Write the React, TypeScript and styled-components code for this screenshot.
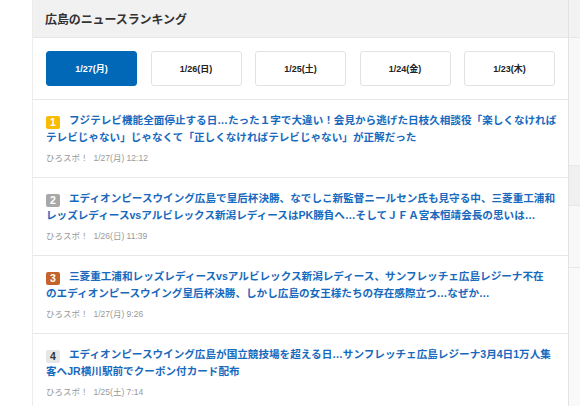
import React, { useState } from "react";
import styled, { createGlobalStyle } from "styled-components";

const Global = createGlobalStyle`
  html, body { margin: 0; padding: 0; background: #ffffff; }
  body { font-family: "Noto Sans CJK JP", "Noto Sans", sans-serif; }
  * { box-sizing: border-box; }
`;

const Page = styled.div`
  display: flex;
  align-items: flex-start;
  width: 580px;
  height: 406px;
  overflow: hidden;
  padding-left: 32px;
  background: #ffffff;
`;

const Panel = styled.section`
  width: 537px;
  flex: none;
  border-left: 1px solid #ececec;
  border-right: 1px solid #e3e3e3;
  display: block;
`;

const Header = styled.h2`
  margin: 0;
  height: 38px;
  padding: 0 12px;
  display: flex;
  align-items: center;
  background: #f1f1f1;
  border-bottom: 1px solid #e6e6e6;
  font-size: 12px;
  font-weight: 700;
  color: #333333;
  letter-spacing: -0.1px;
`;

const Tabs = styled.div`
  display: grid;
  grid-template-columns: repeat(5, 1fr);
  column-gap: 13.5px;
  padding: 13px;
  border-bottom: 1px solid #e8e8e8;
`;

const Tab = styled.button<{ $active: boolean }>`
  height: 35px;
  border-radius: 3px;
  border: 1px solid ${(p) => (p.$active ? "#0068b7" : "#e2e2e2")};
  background: ${(p) => (p.$active ? "#0068b7" : "#ffffff")};
  color: ${(p) => (p.$active ? "#ffffff" : "#222222")};
  font-family: "Liberation Sans", "Noto Sans CJK JP", sans-serif;
  font-weight: 700;
  font-size: 9px;
  padding: 0;
  cursor: pointer;
`;

const List = styled.ol`
  list-style: none;
  margin: 0;
  padding: 0;
`;

const Item = styled.li`
  padding: 12px 13px 13px 13px;
  border-bottom: 1px solid #e8e8e8;
  height: 78px;
`;

const Title = styled.a`
  display: block;
  font-family: "Liberation Sans", "Noto Sans CJK JP", sans-serif;
  font-size: 10.6px;
  line-height: 17px;
  font-weight: 700;
  color: #1769bd;
  text-decoration: none;
  white-space: nowrap;
`;

const Badge = styled.span<{ $bg: string; $fg: string }>`
  display: inline-flex;
  align-items: center;
  justify-content: center;
  width: 14px;
  height: 13px;
  margin-right: 9px;
  border-radius: 2px;
  background: ${(p) => p.$bg};
  color: ${(p) => p.$fg};
  font-family: "Liberation Sans", sans-serif;
  font-size: 10.5px;
  font-weight: 700;
  vertical-align: -2px;
  line-height: 1;
`;

const Meta = styled.div`
  margin-top: 4px;
  font-size: 8.5px;
  line-height: 14px;
  color: #999999;
  font-family: "Liberation Sans", "Noto Sans CJK JP", sans-serif;
`;

const Source = styled.span`
  font-family: "Noto Sans CJK JP", sans-serif;
  margin-right: 5px;
`;

const Aside = styled.aside`
  flex: 1;
  align-self: stretch;
  display: flex;
  flex-direction: column;
  background: #f8f8f8;
`;

const AsideHead = styled.div`
  height: 38px;
  flex: none;
  background: #f2f2f2;
  border-bottom: 1px solid #e6e6e6;
`;

const AsideBlock = styled.div<{ $h: number; $bg: string }>`
  height: ${(p) => p.$h}px;
  background: ${(p) => p.$bg};
  border-bottom: 1px solid #e8e8e8;
  flex: none;
`;

const dates = ["1/27(月)", "1/26(日)", "1/25(土)", "1/24(金)", "1/23(木)"];

const badges = [
  { bg: "#f8bd00", fg: "#ffffff" },
  { bg: "#a8a8a8", fg: "#ffffff" },
  { bg: "#c4632a", fg: "#ffffff" },
  { bg: "#e6e6e6", fg: "#333333" },
];

const news = [
  {
    lines: [
      "フジテレビ機能全面停止する日…たった１字で大違い！会見から逃げた日枝久相談役「楽しくなければ",
      "テレビじゃない」じゃなくて「正しくなければテレビじゃない」が正解だった",
    ],
    date: "1/27(月)",
    time: "12:12",
  },
  {
    lines: [
      "エディオンピースウイング広島で皇后杯決勝、なでしこ新監督ニールセン氏も見守る中、三菱重工浦和",
      "レッズレディースvsアルビレックス新潟レディースはPK勝負へ…そしてＪＦＡ宮本恒靖会長の思いは…",
    ],
    date: "1/26(日)",
    time: "11:39",
  },
  {
    lines: [
      "三菱重工浦和レッズレディースvsアルビレックス新潟レディース、サンフレッチェ広島レジーナ不在",
      "のエディオンピースウイング皇后杯決勝、しかし広島の女王様たちの存在感際立つ…なぜか…",
    ],
    date: "1/27(月)",
    time: "9:26",
  },
  {
    lines: [
      "エディオンピースウイング広島が国立競技場を超える日…サンフレッチェ広島レジーナ3月4日1万人集",
      "客へJR横川駅前でクーポン付カード配布",
    ],
    date: "1/25(土)",
    time: "7:14",
  },
];

export default function App() {
  const [active, setActive] = useState(0);
  return (
    <>
      <Global />
      <Page>
        <Panel>
          <Header>広島のニュースランキング</Header>
          <Tabs>
            {dates.map((d, i) => (
              <Tab key={d} $active={i === active} onClick={() => setActive(i)}>
                {d}
              </Tab>
            ))}
          </Tabs>
          <List>
            {news.map((n, i) => (
              <Item key={i}>
                <Title href="#">
                  <Badge $bg={badges[i].bg} $fg={badges[i].fg}>
                    {i + 1}
                  </Badge>
                  {n.lines[0]}
                  <br />
                  {n.lines[1]}
                </Title>
                <Meta>
                  <Source>ひろスポ！</Source>
                  {n.date} {n.time}
                </Meta>
              </Item>
            ))}
          </List>
        </Panel>
        <Aside>
          <AsideHead />
          <AsideBlock $h={128} $bg="#f8f8f8" />
          <AsideBlock $h={40} $bg="#f0f0f0" />
          <AsideBlock $h={62} $bg="#f8f8f8" />
          <AsideBlock $h={140} $bg="#f9f9f9" />
        </Aside>
      </Page>
    </>
  );
}
